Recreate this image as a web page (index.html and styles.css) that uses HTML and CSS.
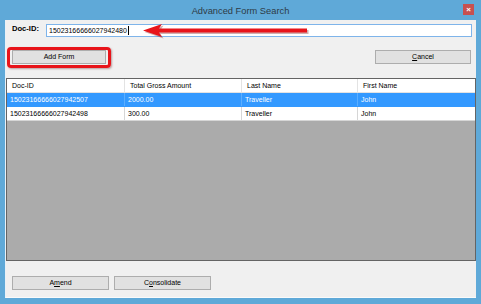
FILE: index.html
```html
<!DOCTYPE html>
<html>
<head>
<meta charset="utf-8">
<link rel="stylesheet" href="styles.css">
</head>
<body>
<div class="window">
  <div class="titlebar">
    <span class="title">Advanced Form Search</span>
    <span class="close">×</span>
  </div>
  <div class="client">
    <div class="search-row">
      <span class="doc-label">Doc-ID:</span>
      <div class="input">15023166666027942480<span class="caret"></span></div>
    </div>
    <div class="action-row">
      <button class="btn btn-add">Add Form</button>
      <button class="btn btn-cancel"><u>C</u>ancel</button>
    </div>
    <div class="grid">
      <div class="grid-row header">
        <div class="cell">Doc-ID</div>
        <div class="cell">Total Gross Amount</div>
        <div class="cell">Last Name</div>
        <div class="cell">First Name</div>
      </div>
      <div class="grid-row selected">
        <div class="cell">15023166666027942507</div>
        <div class="cell">2000.00</div>
        <div class="cell">Traveller</div>
        <div class="cell">John</div>
      </div>
      <div class="grid-row">
        <div class="cell">15023166666027942498</div>
        <div class="cell">300.00</div>
        <div class="cell">Traveller</div>
        <div class="cell">John</div>
      </div>
      <div class="grid-empty"></div>
    </div>
    <div class="footer">
      <button class="btn btn-foot">A<u>m</u>end</button>
      <button class="btn btn-foot">C<u>o</u>nsolidate</button>
    </div>
    <svg class="arrow" width="172" height="18" viewBox="0 0 172 18">
      <g transform="translate(1.5,1.5)" fill="#7a1a1a" opacity="0.35">
        <polygon points="0,6.5 19,0 16,4.5 164,4.5 164,8.5 16,8.5 19,13"/>
      </g>
      <polygon fill="#e8141a" points="0,6.5 19,0 16,4.5 164,4.5 164,8.5 16,8.5 19,13"/>
    </svg>
    <div class="highlight"></div>
  </div>
</div>
</body>
</html>
```

FILE: styles.css
```css
* { box-sizing: border-box; }
html, body {
  margin: 0;
  padding: 0;
  width: 481px;
  height: 304px;
  overflow: hidden;
}
body {
  font-family: "Liberation Sans", Arial, sans-serif;
  font-size: 7px;
  color: #000;
}
.window {
  width: 481px;
  height: 304px;
  background: #5fa9d8;
  display: flex;
  flex-direction: column;
  padding: 0 5px 6px 5px;
}
.titlebar {
  height: 20px;
  display: flex;
  align-items: center;
  padding-left: 13px;
}
.title {
  flex: 1;
  text-align: center;
  font-size: 9.3px;
  color: #2e3b46;
  padding-top: 1px;
}
.close {
  width: 11px;
  height: 11px;
  margin-right: 2px;
  margin-top: -2px;
  background: #c75050;
  color: #fff;
  font-size: 8px;
  font-weight: bold;
  line-height: 11px;
  text-align: center;
}
.client {
  flex: 1;
  position: relative;
  background: #f0f0f0;
  border-bottom: 1px solid #fafafa;
  border-left: 1px solid #e8f1f8;
  display: flex;
  flex-direction: column;
}
.search-row {
  display: flex;
  align-items: flex-start;
  padding: 4px 4px 0 6px;
}
.doc-label {
  font-weight: bold;
  font-size: 7.6px;
  width: 34px;
  line-height: 10px;
  margin-top: 0;
}
.input {
  flex: 1;
  height: 13px;
  background: #fff;
  border: 1px solid #7eb4ea;
  padding: 0 2px;
  line-height: 12px;
  display: flex;
  align-items: center;
}
.caret {
  display: inline-block;
  width: 1px;
  height: 9px;
  background: #000;
  margin-left: 1px;
}
.action-row {
  display: flex;
  justify-content: space-between;
  padding: 0 5px 0 6px;
  margin-top: 13px;
}
.btn {
  font-family: "Liberation Sans", Arial, sans-serif;
  font-size: 7px;
  color: #000;
  background: #e1e1e1;
  border: 1px solid #adadad;
  padding: 0;
  margin: 0;
  height: 14px;
  line-height: 12px;
  text-align: center;
}
.btn-add { width: 94px; }
.btn-cancel { width: 96px; }
.grid {
  margin-top: 14px;
  margin-right: 0;
  height: 183px;
  border: 1px solid #646464;
  background: #ababab;
  display: flex;
  flex-direction: column;
}
.grid-row {
  display: grid;
  grid-template-columns: 118px 117px 116px 1fr;
  height: 14px;
  background: #fff;
  border-bottom: 1px solid #d6d6d6;
}
.grid-row .cell {
  line-height: 13px;
  padding-left: 3px;
  border-right: 1px solid #d6d6d6;
  white-space: nowrap;
  overflow: hidden;
}
.grid-row .cell:last-child { border-right: none; }
.header .cell {
  padding-left: 5px;
  border-right: 1px solid #e3e3e3;
}
.header { border-bottom: 1px solid #e3e3e3; }
.selected { background: #3399ff; color: #fff; border-bottom-color: #3399ff; }
.selected .cell { border-right-color: #5aaeff; }
.grid-empty { flex: 1; }
.footer {
  display: flex;
  gap: 5px;
  padding-left: 6px;
  margin-top: 15px;
}
.btn-foot { width: 97px; height: 14px; }
.arrow {
  position: absolute;
  left: 137px;
  top: 4px;
}
.highlight {
  position: absolute;
  left: 1px;
  top: 27px;
  width: 104px;
  height: 21px;
  border: 3px solid #e8141a;
  border-radius: 4px;
  box-shadow: 1px 1px 2px rgba(80, 0, 0, 0.35);
}
```
